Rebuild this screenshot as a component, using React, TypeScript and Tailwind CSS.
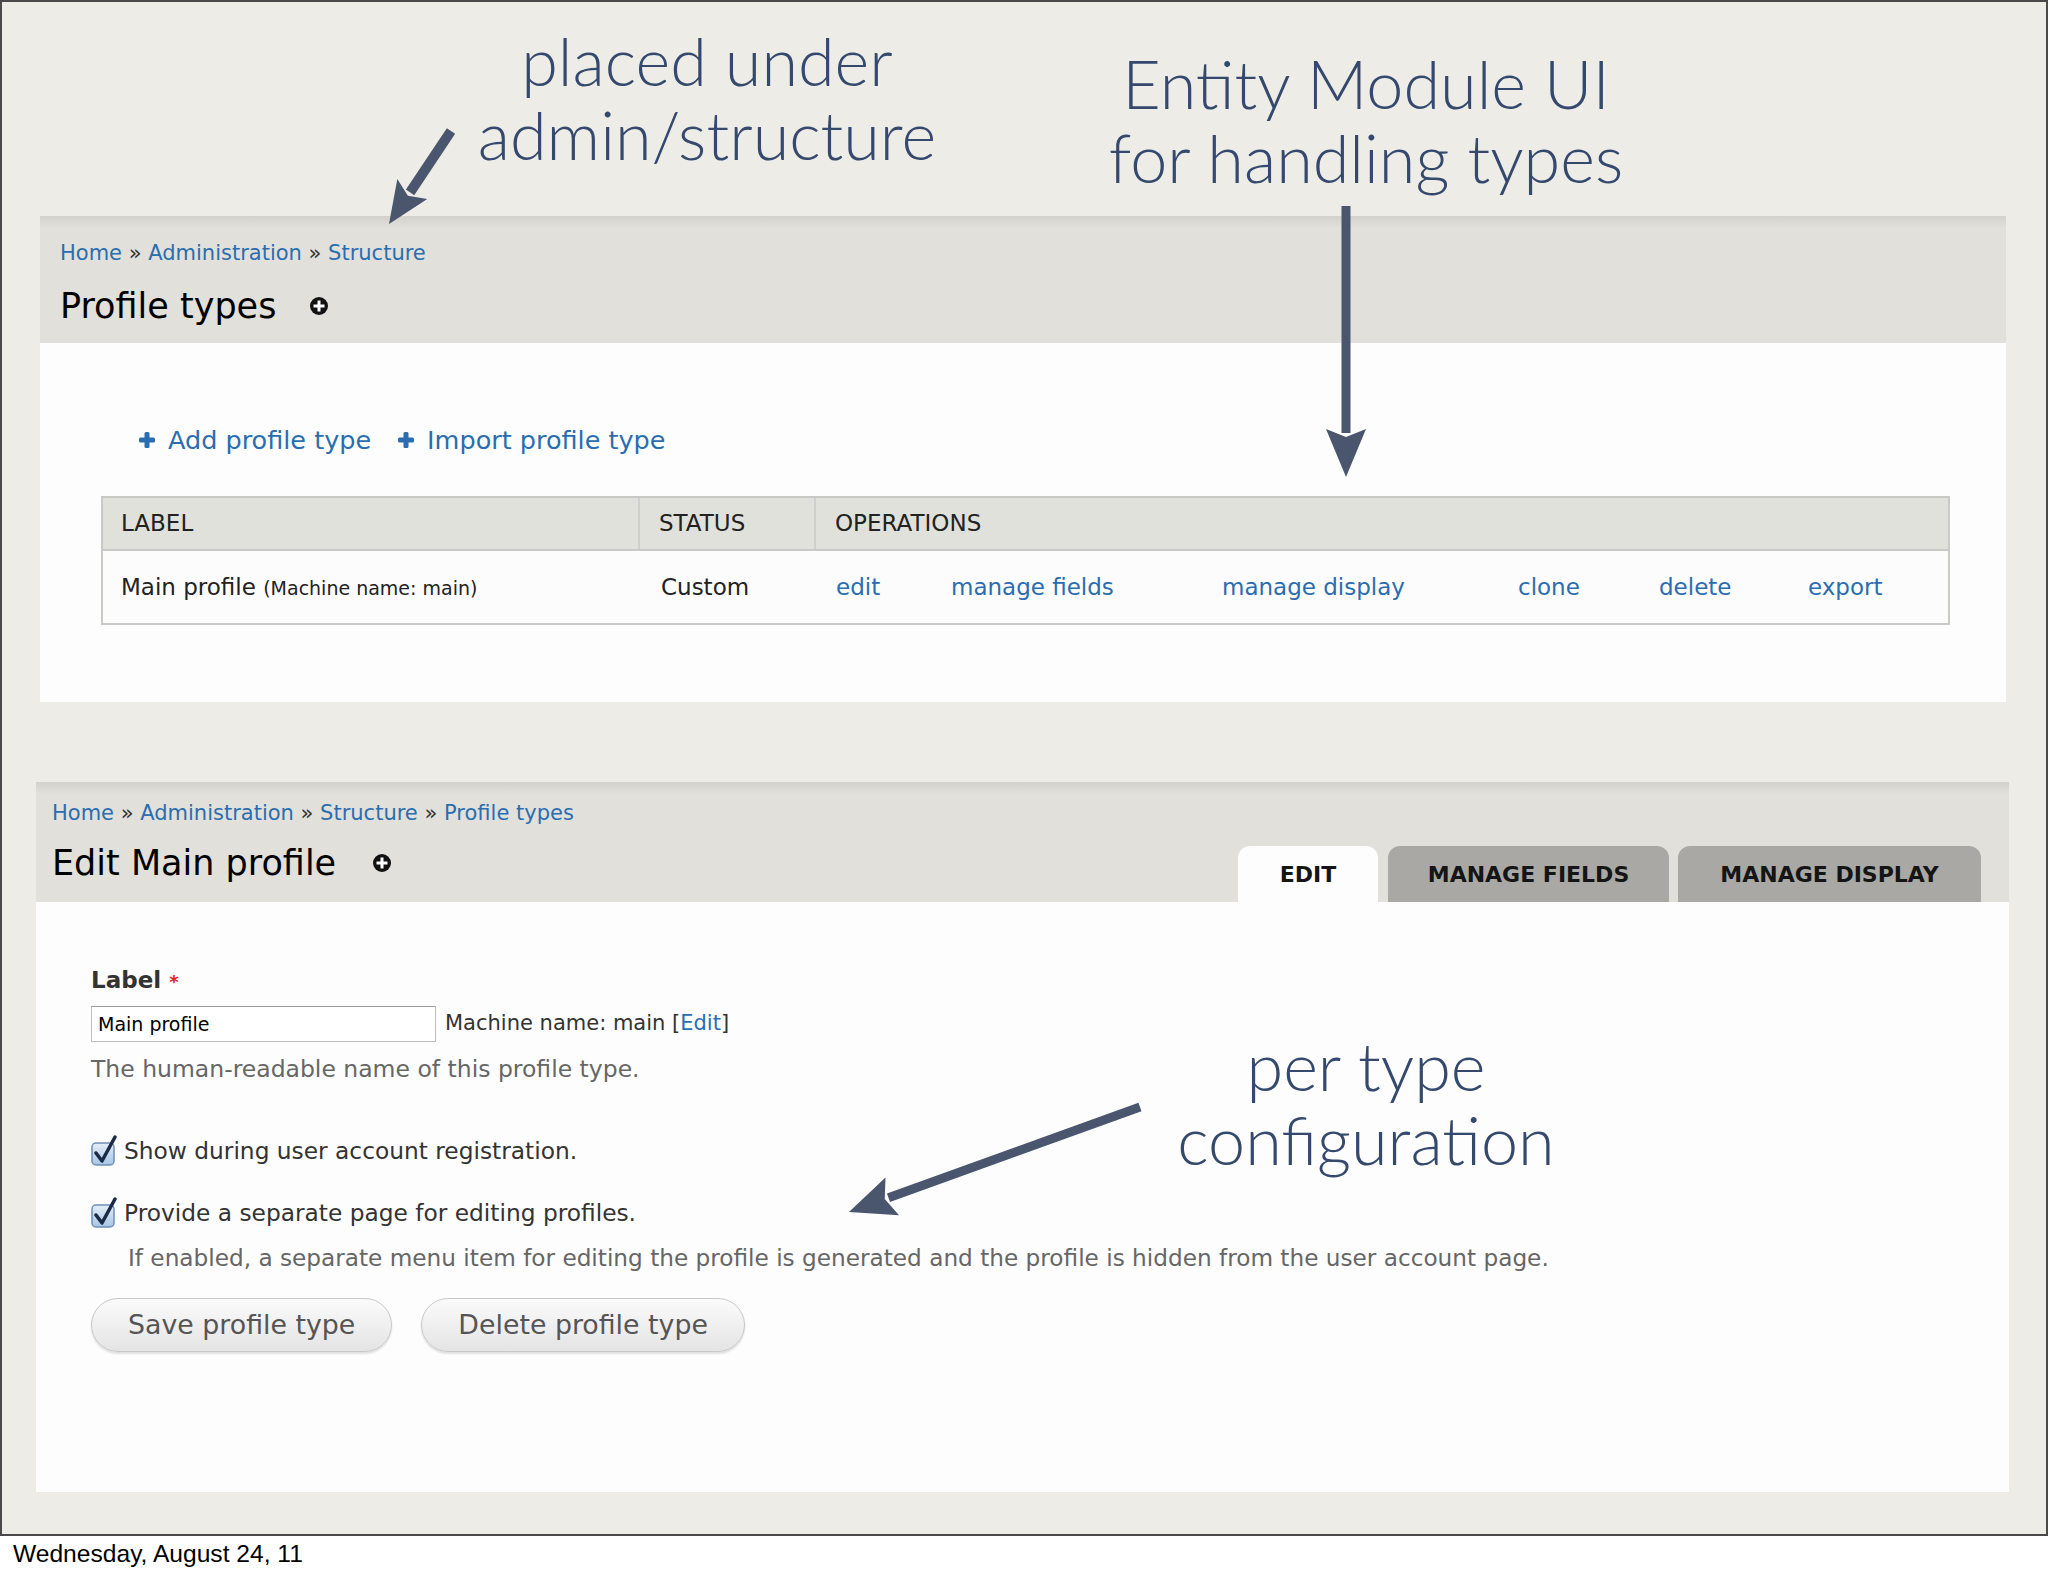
import React from "react";

const ui = "font-['DejaVu_Sans',sans-serif]";
const note = "font-['Lato',sans-serif] font-light text-[#34496d] text-[66.5px] leading-[74px] text-center";

type ArrowProps = { x1: number; y1: number; x2: number; y2: number; head?: number; half?: number; w?: number };

const Arrow = ({ x1, y1, x2, y2, head = 44, half = 19, w = 9 }: ArrowProps) => {
  const dx = x2 - x1;
  const dy = y2 - y1;
  const len = Math.hypot(dx, dy);
  const ux = dx / len;
  const uy = dy / len;
  const bx = x2 - ux * head;
  const by = y2 - uy * head;
  const px = -uy;
  const py = ux;
  return (
    <g>
      <line x1={x1} y1={y1} x2={bx + ux * 4} y2={by + uy * 4} stroke="#4a566e" strokeWidth={w} />
      <polygon
        points={`${x2},${y2} ${bx + px * half},${by + py * half} ${bx + ux * 8},${by + uy * 8} ${bx - px * half},${by - py * half}`}
        fill="#4a566e"
      />
    </g>
  );
};

const CirclePlus = () => (
  <svg width="20" height="20" viewBox="0 0 20 20">
    <circle cx="10" cy="10" r="9" fill="#111" />
    <rect x="8.5" y="4.5" width="3" height="11" fill="#fff" />
    <rect x="4.5" y="8.5" width="11" height="3" fill="#fff" />
  </svg>
);

const BluePlus = () => (
  <svg width="18" height="18" viewBox="0 0 18 18">
    <rect x="6.5" y="1" width="5" height="16" rx="1.5" fill="#2a6db0" />
    <rect x="1" y="6.5" width="16" height="5" rx="1.5" fill="#2a6db0" />
  </svg>
);

const Check = () => (
  <svg width="28" height="32" viewBox="0 0 28 32" className="shrink-0">
    <defs>
      <linearGradient id="cb" x1="0" y1="0" x2="0" y2="1">
        <stop offset="0" stopColor="#e4eef9" />
        <stop offset="1" stopColor="#a7c4e6" />
      </linearGradient>
    </defs>
    <rect x="1" y="8" width="22" height="22" rx="4" fill="url(#cb)" stroke="#6f8fb5" strokeWidth="1.5" />
    <path d="M5 18 L11 26 L24 2" fill="none" stroke="#1c2a48" strokeWidth="3.5" strokeLinecap="round" strokeLinejoin="round" />
  </svg>
);

const ops = [
  { t: "edit", w: "w-[115px]" },
  { t: "manage fields", w: "w-[271px]" },
  { t: "manage display", w: "w-[296px]" },
  { t: "clone", w: "w-[141px]" },
  { t: "delete", w: "w-[149px]" },
  { t: "export", w: "w-[120px]" },
];

const Crumbs = ({ items }: { items: string[] }) => (
  <div className="text-[21px] leading-[28px] text-[#2a6db0]">
    {items.map((c, i) => (
      <span key={c}>
        {i > 0 && <span className="text-[#333]"> » </span>}
        {c}
      </span>
    ))}
  </div>
);

export default function App() {
  return (
    <div className={`w-[2048px] h-[1576px] bg-white ${ui}`}>
      <div className="relative w-[2048px] h-[1536px] border-2 border-[#4a4a4a] bg-[#eeece7] pt-[214px]">
        {/* top panel: type list */}
        <div className="ml-[38px] w-[1966px]">
          <div className="h-[127px] bg-[linear-gradient(#d3d1cc,#e2e0db_12px)] pl-[20px] pt-[23px]">
            <Crumbs items={["Home", "Administration", "Structure"]} />
            <div className="mt-[19px] flex items-center gap-[33px]">
              <span className="text-[35px] leading-[40px] text-black">Profile types</span>
              <CirclePlus />
            </div>
          </div>
          <div className="h-[359px] bg-[#fdfdfd] pt-[82px]">
            <div className="ml-[98px] flex items-center text-[25.5px] leading-[30px] text-[#2a6db0]">
              <BluePlus />
              <span className="ml-[12px]">Add profile type</span>
              <span className="ml-[26px]"><BluePlus /></span>
              <span className="ml-[12px]">Import profile type</span>
            </div>
            <div className="ml-[61px] mt-[41px] w-[1849px] border-2 border-[#c9c9c6]">
              <div className="flex h-[53px] bg-[#e1e1dc] border-b-2 border-[#c9c9c6] text-[23px] text-[#222] uppercase">
                <div className="w-[537px] border-r-2 border-[#cfcfcb] pl-[18px] flex items-center">Label</div>
                <div className="w-[176px] border-r-2 border-[#cfcfcb] pl-[19px] flex items-center">Status</div>
                <div className="flex-1 pl-[19px] flex items-center">Operations</div>
              </div>
              <div className="flex h-[72px] items-center bg-[#fcfcfc] text-[23px] text-[#222]">
                <div className="w-[539px] pl-[18px]">
                  Main profile <span className="text-[19px]">(Machine name: main)</span>
                </div>
                <div className="w-[176px] pl-[19px]">Custom</div>
                <div className="flex pl-[18px] text-[#2a6db0]">
                  {ops.map((o) => (
                    <span key={o.t} className={o.w}>{o.t}</span>
                  ))}
                </div>
              </div>
            </div>
          </div>
        </div>

        {/* bottom panel: edit form */}
        <div className="ml-[34px] mt-[80px] w-[1973px]">
          <div className="h-[120px] bg-[linear-gradient(#d3d1cc,#e2e0db_12px)] flex justify-between items-end pl-[16px] pr-[28px]">
            <div className="self-start pt-[17px]">
              <Crumbs items={["Home", "Administration", "Structure", "Profile types"]} />
              <div className="mt-[16px] flex items-center gap-[36px]">
                <span className="text-[35px] leading-[40px] text-black">Edit Main profile</span>
                <CirclePlus />
              </div>
            </div>
            <div className="flex items-end text-[22px] font-bold uppercase text-[#151515]">
              <div className="w-[140px] h-[56px] rounded-t-[12px] bg-[#fdfdfd] flex items-center justify-center">Edit</div>
              <div className="ml-[10px] w-[281px] h-[56px] rounded-t-[12px] bg-[#a9a8a4] flex items-center justify-center">Manage fields</div>
              <div className="ml-[9px] w-[303px] h-[56px] rounded-t-[12px] bg-[#a9a8a4] flex items-center justify-center">Manage display</div>
            </div>
          </div>
          <div className="h-[590px] bg-[#fdfdfd] pl-[55px] pt-[63px]">
            <div className="text-[23px] leading-[30px] font-bold text-[#333]">
              Label <span className="text-[#d22] text-[18px]">*</span>
            </div>
            <div className="mt-[9px] flex items-center">
              <div className="w-[345px] h-[36px] border border-[#bdbdbd] border-t-[#9a9a9a] bg-white pl-[6px] flex items-center text-[19px] text-black">
                Main profile
              </div>
              <span className="ml-[9px] text-[21px] text-[#333]">
                Machine name: main [<span className="text-[#2a6db0]">Edit</span>]
              </span>
            </div>
            <div className="mt-[12px] text-[23.5px] leading-[30px] text-[#666]">
              The human-readable name of this profile type.
            </div>
            <div className="mt-[52px] flex items-center h-[30px] text-[23.3px] text-[#333]">
              <Check />
              <span className="ml-[5px]">Show during user account registration.</span>
            </div>
            <div className="mt-[32px] flex items-center h-[30px] text-[23.3px] text-[#333]">
              <Check />
              <span className="ml-[5px]">Provide a separate page for editing profiles.</span>
            </div>
            <div className="mt-[15px] pl-[37px] text-[23.2px] leading-[30px] text-[#666]">
              If enabled, a separate menu item for editing the profile is generated and the profile is hidden from the user account page.
            </div>
            <div className="mt-[25px] flex gap-[29px]">
              <button className="h-[54px] px-[36px] rounded-full border border-[#c8c8c8] bg-[linear-gradient(#fbfbfb,#e4e4e4)] shadow-[0_2px_2px_rgba(0,0,0,0.12)] text-[26.8px] text-[#555]">
                Save profile type
              </button>
              <button className="h-[54px] px-[36px] rounded-full border border-[#c8c8c8] bg-[linear-gradient(#fbfbfb,#e4e4e4)] shadow-[0_2px_2px_rgba(0,0,0,0.12)] text-[26.8px] text-[#555]">
                Delete profile type
              </button>
            </div>
          </div>
        </div>

        {/* slide annotations */}
        <div className={`absolute left-[405px] top-[21px] w-[600px] ${note}`}>
          placed under
          <br />
          admin/structure
        </div>
        <div className={`absolute left-[1064px] top-[44px] w-[600px] ${note}`}>
          Entity Module UI
          <br />
          for handling types
        </div>
        <div className={`absolute left-[1064px] top-[1026px] w-[600px] ${note}`}>
          per type
          <br />
          configuration
        </div>
        <svg className="absolute left-[-2px] top-[-2px] pointer-events-none" width="2048" height="1536">
          <Arrow x1={451} y1={131} x2={389} y2={224} head={42} half={18} w={10} />
          <Arrow x1={1346} y1={206} x2={1346} y2={477} head={48} half={20} />
          <Arrow x1={1140} y1={1107} x2={849} y2={1212} head={46} half={20} />
        </svg>
      </div>
      <div className="pl-[13px] pt-[4px] font-['Liberation_Sans',sans-serif] text-[24.6px] leading-[28px] text-black">
        Wednesday, August 24, 11
      </div>
    </div>
  );
}
